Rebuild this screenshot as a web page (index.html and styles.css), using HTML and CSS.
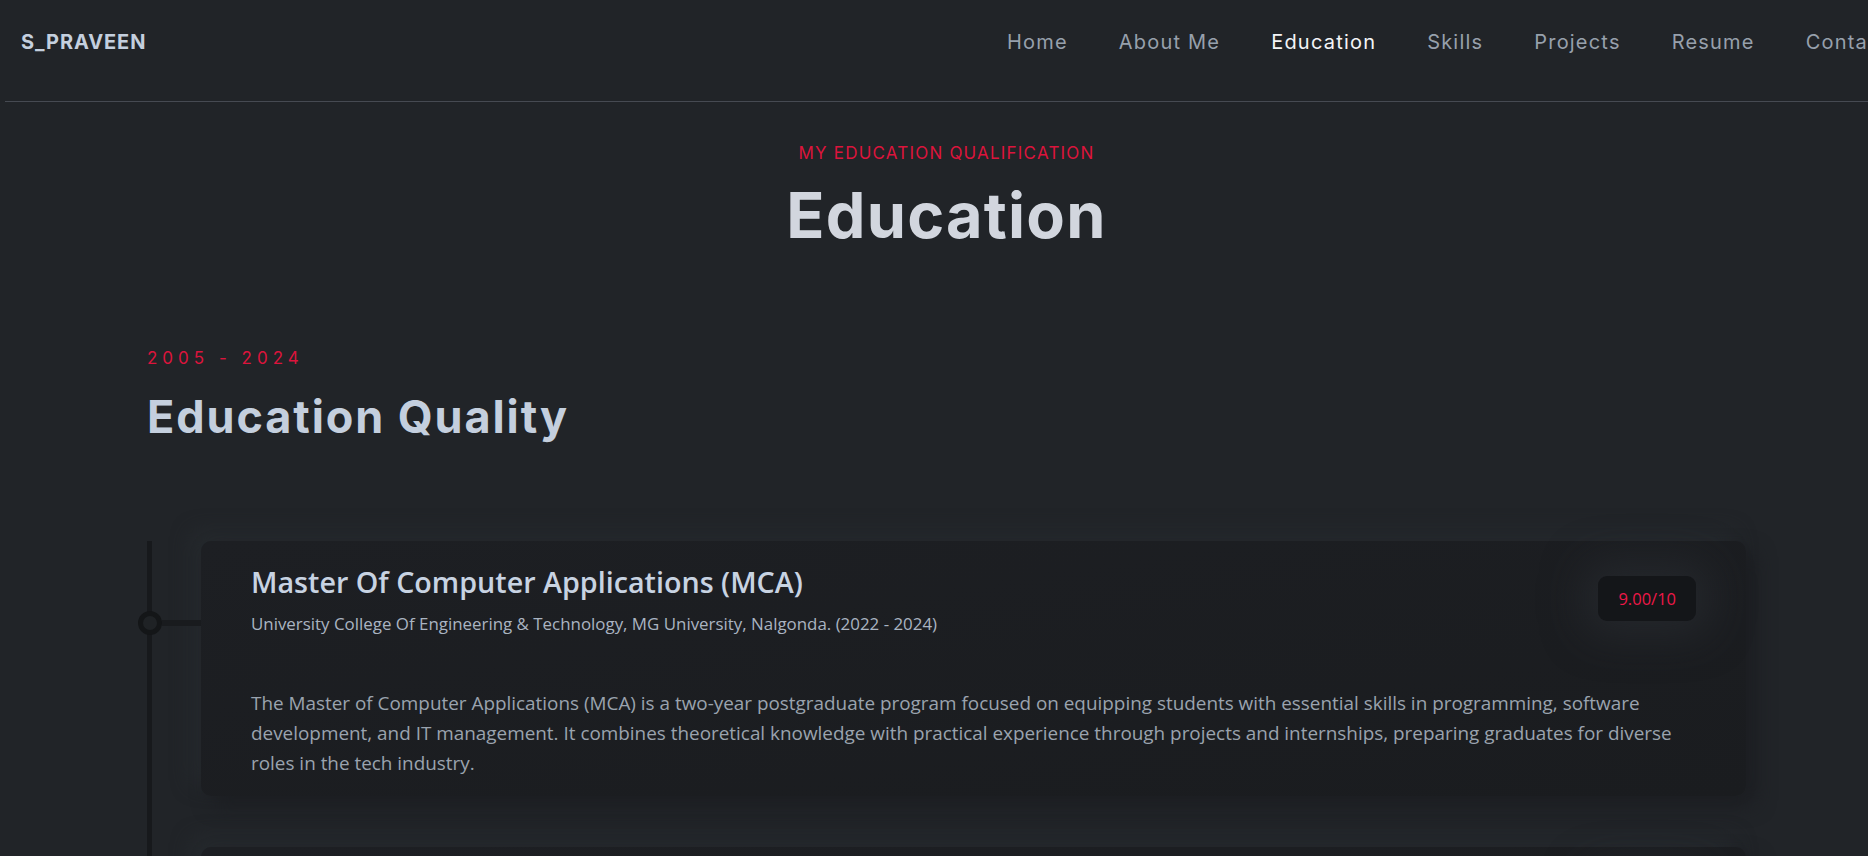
FILE: index.html
```html
<!DOCTYPE html>
<html lang="en">
<head>
<meta charset="utf-8">
<title>S_PRAVEEN - Education</title>
<link rel="stylesheet" href="styles.css">
</head>
<body>
<header class="header">
  <div class="logo">S_PRAVEEN</div>
  <nav class="nav">
    <a class="nav-link" href="#">Home</a>
    <a class="nav-link" href="#">About Me</a>
    <a class="nav-link active" href="#">Education</a>
    <a class="nav-link" href="#">Skills</a>
    <a class="nav-link" href="#">Projects</a>
    <a class="nav-link" href="#">Resume</a>
    <a class="nav-link" href="#">Contact</a>
  </nav>
</header>
<main class="section">
  <div class="content">
    <div class="section-title">
      <p class="eyebrow">MY EDUCATION QUALIFICATION</p>
      <h1 class="title">Education</h1>
    </div>
    <p class="years">2005 - 2024</p>
    <h2 class="subtitle">Education Quality</h2>
    <div class="timeline">
      <article class="card">
        <div class="card-head">
          <div class="card-heading">
            <h3 class="card-title">Master Of Computer Applications (MCA)</h3>
            <p class="card-meta">University College Of Engineering &amp; Technology, MG University, Nalgonda. (2022 - 2024)</p>
          </div>
          <span class="badge">9.00/10</span>
        </div>
        <p class="card-text">The Master of Computer Applications (MCA) is a two-year postgraduate program focused on equipping students with essential skills in programming, software development, and IT management. It combines theoretical knowledge with practical experience through projects and internships, preparing graduates for diverse roles in the tech industry.</p>
      </article>
      <article class="card">
        <div class="card-head">
          <div class="card-heading">
            <h3 class="card-title">Bachelor Of Science (B.Sc)</h3>
            <p class="card-meta">Nalgonda. (2019 - 2022)</p>
          </div>
          <span class="badge">8.00/10</span>
        </div>
        <p class="card-text">Undergraduate program in science.</p>
      </article>
    </div>
  </div>
</main>
</body>
</html>
```
FILE: styles.css
```css
html {
  scrollbar-width: none;
}
html::-webkit-scrollbar {
  display: none;
}
body {
  margin: 0;
  background: #212428;
  overflow-x: hidden;
  font-family: "Open Sans", "Noto Sans", sans-serif;
}

.header {
  display: grid;
  grid-template-columns: 986px auto;
  align-items: center;
  height: 84px;
  padding: 0 0 17px 16px;
  margin-left: 5px;
  border-bottom: 1px solid #464a52;
  white-space: nowrap;
}
.logo {
  font-family: "Inter", sans-serif;
  font-weight: 700;
  font-size: 20px;
  color: #c4cfde;
  letter-spacing: 0.9px;
}
.nav {
  display: flex;
  gap: 51px;
}
.nav-link {
  font-family: "Inter", sans-serif;
  font-size: 20px;
  font-weight: 400;
  color: #97a0ac;
  text-decoration: none;
  letter-spacing: 1.2px;
}
.nav-link.active {
  color: #f4f5f7;
}

.section {
  padding-top: 39px;
}
.content {
  margin-left: 147px;
  width: 1599px;
}
.section-title {
  text-align: center;
}
.eyebrow {
  margin: 0;
  font-family: "Inter", sans-serif;
  font-size: 17px;
  line-height: 24px;
  color: #dc143c;
  letter-spacing: 1.2px;
}
.title {
  margin: 12px 0 0;
  font-family: "Inter", sans-serif;
  font-weight: 700;
  font-size: 63px;
  line-height: 77px;
  color: #d2d6de;
  letter-spacing: 1.2px;
}

.years {
  margin: 92px 0 0;
  font-family: "Inter", sans-serif;
  font-size: 17px;
  line-height: 24px;
  letter-spacing: 5px;
  color: #dc143c;
}
.subtitle {
  margin: 20px 0 0;
  font-family: "Inter", sans-serif;
  font-weight: 700;
  font-size: 45px;
  line-height: 54px;
  color: #c4cfde;
  letter-spacing: 1.9px;
}

.timeline {
  margin-top: 97px;
  border-left: 5px solid #17191c;
  padding-left: 49px;
  display: flex;
  flex-direction: column;
  gap: 51px;
}
.card {
  position: relative;
  background: linear-gradient(to right bottom, #1d1f23, #1a1c1f);
  border-radius: 10px;
  padding: 23px 50px 18px;
  box-shadow: 10px 10px 19px #1c1e22, -10px -10px 19px #262a2e;
}
.card::before {
  content: "";
  position: absolute;
  left: -39px;
  top: 79px;
  width: 39px;
  height: 6px;
  background: #191b1e;
}
.card::after {
  content: "";
  position: absolute;
  left: -63px;
  top: 70px;
  width: 14px;
  height: 14px;
  border: 5px solid #141618;
  border-radius: 50%;
  background: #1f2225;
}
.card-head {
  display: flex;
  justify-content: space-between;
  align-items: flex-start;
}
.card-title {
  margin: 0;
  font-weight: 600;
  font-size: 28.7px;
  line-height: 36px;
  color: #c8d3e2;
}
.card-meta {
  margin: 12px 0 0;
  font-size: 16.9px;
  line-height: 24px;
  color: #aab4c1;
}
.badge {
  margin-top: 12px;
  padding: 10px 20px;
  font-size: 16.5px;
  line-height: 25px;
  color: #ee1848;
  background: #141619;
  border-radius: 9px;
  box-shadow: 0 0 40px 14px rgba(44, 47, 52, 0.55);
}
.card-text {
  margin: 52px 0 0;
  font-size: 18.9px;
  line-height: 30px;
  color: #9aa3ae;
}
```
